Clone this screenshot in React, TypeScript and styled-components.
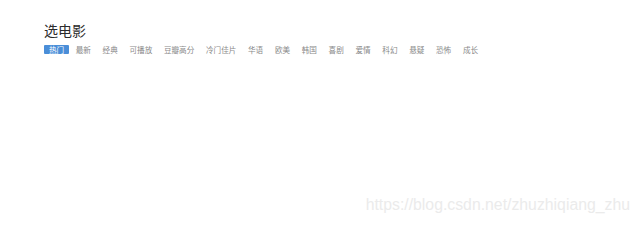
import { useState } from "react";
import styled, { createGlobalStyle } from "styled-components";

const GlobalStyle = createGlobalStyle`
  html, body {
    margin: 0;
    padding: 0;
    background: #fff;
    font-family: "Noto Sans CJK SC", "Liberation Sans", sans-serif;
  }
`;

const Page = styled.div`
  position: relative;
  width: 640px;
  height: 224px;
  padding: 23px 0 0 44px;
  box-sizing: border-box;
  overflow: hidden;
`;

const Title = styled.h2`
  margin: 0;
  font-size: 14px;
  line-height: 14px;
  font-weight: 400;
  color: #2b2b2b;
`;

const TagList = styled.ul`
  display: flex;
  margin: 7.7px 0 0;
  padding: 0;
  list-style: none;
`;

const Tag = styled.li<{ $active: boolean }>`
  padding: 0 4.9px;
  margin-right: 1.9px;
  height: 9.3px;
  line-height: 9.3px;
  font-size: 7.6px;
  cursor: pointer;
  border-radius: 1px;
  color: ${(props) => (props.$active ? "#fff" : "#8a8a8a")};
  background-color: ${(props) => (props.$active ? "#4a8ed8" : "transparent")};
`;

const Watermark = styled.div`
  position: absolute;
  top: 197px;
  right: 10px;
  font-family: "Liberation Sans", Arial, sans-serif;
  font-size: 15.8px;
  line-height: 16px;
  color: #ebebeb;
  white-space: nowrap;
`;

const tags = [
  "热门",
  "最新",
  "经典",
  "可播放",
  "豆瓣高分",
  "冷门佳片",
  "华语",
  "欧美",
  "韩国",
  "喜剧",
  "爱情",
  "科幻",
  "悬疑",
  "恐怖",
  "成长",
];

function App() {
  const [current, setCurrent] = useState("热门");
  return (
    <Page>
      <GlobalStyle />
      <Title>选电影</Title>
      <TagList>
        {tags.map((tag) => (
          <Tag key={tag} $active={tag === current} onClick={() => setCurrent(tag)}>
            {tag}
          </Tag>
        ))}
      </TagList>
      <Watermark>https://blog.csdn.net/zhuzhiqiang_zhu</Watermark>
    </Page>
  );
}

export default App;
